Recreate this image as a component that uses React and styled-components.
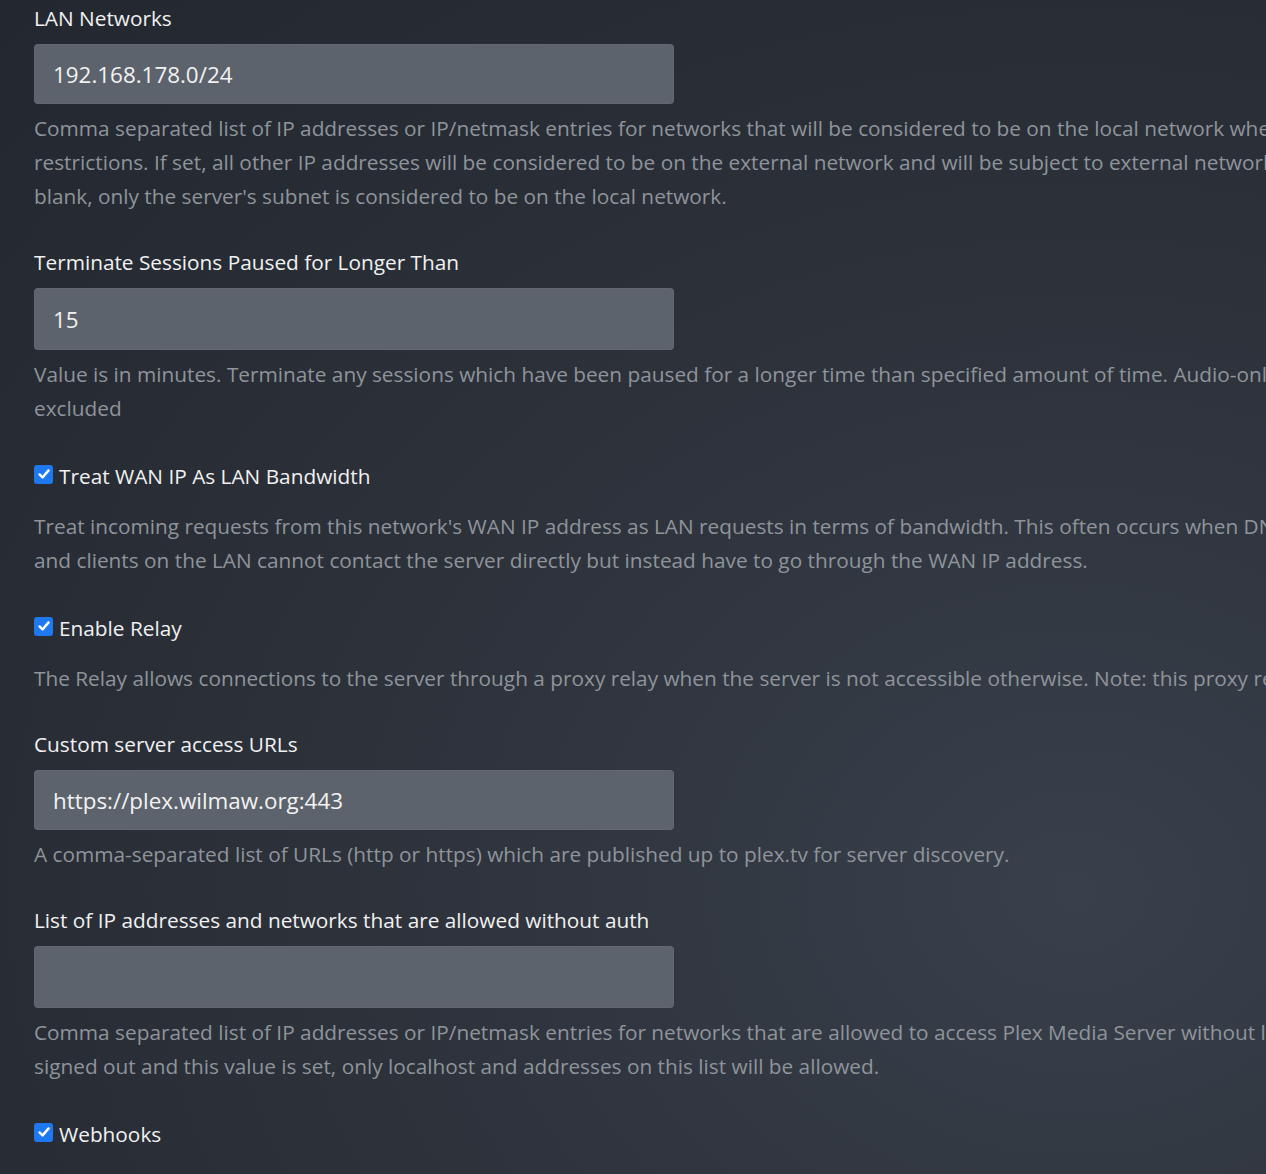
import React from 'react';
import styled, { createGlobalStyle } from 'styled-components';

const GlobalStyle = createGlobalStyle`
    html, body {
        margin: 0;
        padding: 0;
        overflow: hidden;
    }
    body {
        min-height: 1174px;
        background: radial-gradient(ellipse at 85% 75%, #39404b 0%, #2d323b 45%, #23272f 100%);
        font-family: 'Open Sans', 'Noto Sans', sans-serif;
    }
`;

const Page = styled.div`
    display: flex;
    flex-direction: column;
    gap: 36px;
    padding: 5px 0 40px 34px;
    width: 1700px;
`;

const Group = styled.div`
    display: flex;
    flex-direction: column;
`;

const Label = styled.div`
    font-size: 20.8px;
    line-height: 26px;
    color: #f1f1f1;
`;

const TextInput = styled.div`
    box-sizing: border-box;
    margin-top: 13px;
    width: 640px;
    height: ${(p) => p.$h || 60}px;
    padding: 0 19px;
    display: flex;
    align-items: center;
    background: #5d636c;
    border-radius: 4px;
    box-shadow: inset 0 0 0 1px rgba(255, 255, 255, 0.03);
    font-size: 22.4px;
    color: #f2f2f2;
`;

const Desc = styled.div`
    margin-top: ${(p) => p.$top || 7}px;
    font-size: 20.8px;
    line-height: 34px;
    color: #8f949b;
`;

const Line = styled.div`
    white-space: nowrap;
`;

const CheckRow = styled.label`
    display: flex;
    align-items: center;
    gap: 6px;
    height: 30px;
    font-size: 20.8px;
    color: #f1f1f1;
`;

const Box = styled.span`
    width: 19px;
    height: 19px;
    border-radius: 3px;
    background: #1e78ef;
    display: flex;
    align-items: center;
    justify-content: center;
    margin-top: -4px;
`;

function Check({ children }) {
    return (
        <CheckRow>
            <Box>
                <svg width="14" height="14" viewBox="0 0 14 14">
                    <path d="M2.5 7.4 L5.6 10.4 L11.6 3.4" fill="none" stroke="#fff" strokeWidth="2.4" strokeLinecap="round" strokeLinejoin="round" />
                </svg>
            </Box>
            {children}
        </CheckRow>
    );
}

function Description({ lines, top }) {
    return (
        <Desc $top={top}>
            {lines.map((l) => (
                <Line key={l}>{l}</Line>
            ))}
        </Desc>
    );
}

export default function App() {
    return (
        <>
            <GlobalStyle />
            <Page>
                <Group>
                    <Label>LAN Networks</Label>
                    <TextInput>192.168.178.0/24</TextInput>
                    <Description
                        lines={[
                            'Comma separated list of IP addresses or IP/netmask entries for networks that will be considered to be on the local network when enforcing bandwidth',
                            'restrictions. If set, all other IP addresses will be considered to be on the external network and will be subject to external network bandwidth restrictions. If left',
                            "blank, only the server's subnet is considered to be on the local network.",
                        ]}
                    />
                </Group>
                <Group>
                    <Label>Terminate Sessions Paused for Longer Than</Label>
                    <TextInput $h={62}>15</TextInput>
                    <Description
                        lines={[
                            'Value is in minutes. Terminate any sessions which have been paused for a longer time than specified amount of time. Audio-only sessions are',
                            'excluded',
                        ]}
                    />
                </Group>
                <Group>
                    <Check>Treat WAN IP As LAN Bandwidth</Check>
                    <Description
                        top={18}
                        lines={[
                            "Treat incoming requests from this network's WAN IP address as LAN requests in terms of bandwidth. This often occurs when DNS rebinding protection is in place",
                            'and clients on the LAN cannot contact the server directly but instead have to go through the WAN IP address.',
                        ]}
                    />
                </Group>
                <Group>
                    <Check>Enable Relay</Check>
                    <Description
                        top={18}
                        lines={[
                            'The Relay allows connections to the server through a proxy relay when the server is not accessible otherwise. Note: this proxy relay is bandwidth limited.',
                        ]}
                    />
                </Group>
                <Group>
                    <Label>Custom server access URLs</Label>
                    <TextInput>https://plex.wilmaw.org:443</TextInput>
                    <Description
                        lines={[
                            'A comma-separated list of URLs (http or https) which are published up to plex.tv for server discovery.',
                        ]}
                    />
                </Group>
                <Group>
                    <Label>List of IP addresses and networks that are allowed without auth</Label>
                    <TextInput $h={62} />
                    <Description
                        lines={[
                            'Comma separated list of IP addresses or IP/netmask entries for networks that are allowed to access Plex Media Server without logging in. When the server is',
                            'signed out and this value is set, only localhost and addresses on this list will be allowed.',
                        ]}
                    />
                </Group>
                <Group>
                    <Check>Webhooks</Check>
                </Group>
            </Page>
        </>
    );
}
